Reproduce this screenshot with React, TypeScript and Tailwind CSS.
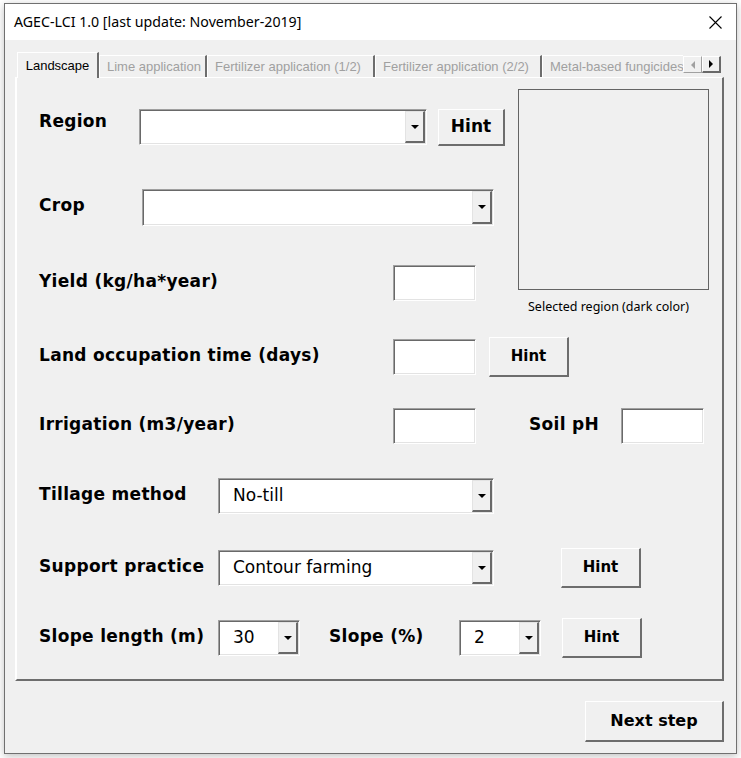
import type { ReactNode } from "react";

const sunken =
  "bg-white border border-t-[#a0a0a0] border-l-[#a0a0a0] border-r-white border-b-white shadow-[inset_1px_1px_0_#696969,inset_-1px_-1px_0_#e3e3e3] p-[1px]";
const raised =
  "flex items-center justify-center bg-[#f0f0f0] border-t border-l border-r-2 border-b-2 border-t-white border-l-white border-r-[#6d6d6d] border-b-[#6d6d6d] text-black font-bold font-['DejaVu_Sans',sans-serif]";
const label =
  "shrink-0 pb-[3px] text-[17px] font-bold tracking-[0.3px] text-black font-['DejaVu_Sans',sans-serif]";

const tabs = [
  { label: "Lime application", w: "w-[108px]" },
  { label: "Fertilizer application (1/2)", w: "w-[168px]" },
  { label: "Fertilizer application (2/2)", w: "w-[167px]" },
  { label: "Metal-based fungicides", w: "w-[160px]" },
];

function Arrow({ dir, color }: { dir: "down" | "left" | "right"; color: string }) {
  if (dir === "down")
    return (
      <svg width="8" height="4" viewBox="0 0 8 4">
        <polygon points="0,0 8,0 4,4" fill={color} />
      </svg>
    );
  return (
    <svg width="4" height="8" viewBox="0 0 4 8">
      <polygon points={dir === "right" ? "0,0 4,4 0,8" : "4,0 0,4 4,8"} fill={color} />
    </svg>
  );
}

function Combo({ w, h = "h-[36px]", value }: { w: string; h?: string; value?: string }) {
  return (
    <div className={`${sunken} ${w} ${h} flex shrink-0`}>
      <div className="flex flex-1 items-center pl-[13px] text-[17px] text-black font-['DejaVu_Sans',sans-serif]">
        {value}
      </div>
      <div className="flex w-[20px] items-center justify-center border-l border-t border-r-2 border-b-2 border-l-[#e3e3e3] border-t-[#e3e3e3] border-r-[#696969] border-b-[#696969] bg-[#f0f0f0]">
        <Arrow dir="down" color="#000" />
      </div>
    </div>
  );
}

function Field({ w = "w-[83px]" }: { w?: string }) {
  return <div className={`${sunken} ${w} h-[36px] shrink-0`} />;
}

function Hint({ cls, text = "text-[15px]" }: { cls: string; text?: string }) {
  return <div className={`${raised} ${cls} ${text} shrink-0`}>Hint</div>;
}

function Row({ mt, children }: { mt: string; children: ReactNode }) {
  return <div className={`flex h-[40px] items-center ${mt}`}>{children}</div>;
}

export default function App() {
  return (
    <div className="h-[758px] w-[741px] bg-white pl-[4px] pt-[3px]">
      <div className="flex h-[751px] w-[733px] flex-col border border-[#707070] shadow-[0_2px_8px_rgba(0,0,0,0.25)]">
        {/* title bar */}
        <div className="flex h-[36px] shrink-0 items-center justify-between bg-white pl-[9px] pr-[14px]">
          <span className="text-[14.2px] text-black font-['Noto_Sans',sans-serif]">
            AGEC-LCI 1.0 [last update: November-2019]
          </span>
          <svg width="13" height="13" viewBox="0 0 13 13">
            <path d="M0.5 0.5 L12.5 12.5 M12.5 0.5 L0.5 12.5" stroke="#000" strokeWidth="1.1" />
          </svg>
        </div>

        {/* body */}
        <div className="flex flex-1 flex-col bg-[#f0f0f0] pl-[10px] pt-[12px]">
          {/* tab strip */}
          <div className="relative z-10 flex h-[25px] w-[709px] items-end pl-[2px]">
            <div className="-mb-[1px] flex h-[26px] w-[82px] shrink-0 items-start justify-center border-l border-t border-r-2 border-l-white border-t-white border-r-[#6d6d6d] bg-[#f0f0f0] pt-[3px] text-[13px] text-black font-['Liberation_Sans',sans-serif]">
              Landscape
            </div>
            <div className="flex w-[584px] overflow-hidden">
              {tabs.map((t) => (
                <div
                  key={t.label}
                  className={`${t.w} flex h-[22px] shrink-0 items-center justify-start whitespace-nowrap border-l border-t border-r-2 border-l-white border-t-white border-r-[#6d6d6d] bg-[#f0f0f0] pl-[7px] text-[13px] text-[#a0a0a0] font-['Liberation_Sans',sans-serif]`}
                >
                  {t.label}
                </div>
              ))}
            </div>
            <div className="mb-[4px] flex h-[17px] shrink-0">
              <div className="flex w-[19px] items-center justify-center border-l border-t border-r border-b border-l-white border-t-white border-r-[#a0a0a0] border-b-[#a0a0a0] bg-[#f0f0f0]">
                <Arrow dir="left" color="#a0a0a0" />
              </div>
              <div className="flex w-[19px] items-center justify-center border-l border-t border-r-2 border-b-2 border-l-white border-t-white border-r-[#696969] border-b-[#696969] bg-[#f0f0f0]">
                <Arrow dir="right" color="#000" />
              </div>
            </div>
          </div>

          {/* tab panel */}
          <div className="flex h-[604px] w-[709px] flex-col border-t border-l-2 border-r-2 border-b-2 border-t-white border-l-white border-r-[#6d6d6d] border-b-[#6d6d6d] pl-[22px]">
            <div className="flex items-start pt-[11px]">
              <div className="flex w-[479px] shrink-0 flex-col pt-[18px]">
                <Row mt="mt-0">
                  <span className={`${label} w-[100px] !pb-[11px]`}>Region</span>
                  <Combo w="w-[288px]" />
                  <Hint cls="ml-[11px] h-[37px] w-[67px]" text="text-[17px]" />
                </Row>
                <Row mt="mt-[40px]">
                  <span className={`${label} w-[103px]`}>Crop</span>
                  <Combo w="w-[352px]" h="h-[37px]" />
                </Row>
                <Row mt="mt-[36px]">
                  <span className={`${label} w-[354px]`}>Yield (kg/ha*year)</span>
                  <Field />
                </Row>
              </div>
              <div className="flex flex-col">
                <div className="h-[201px] w-[191px] border border-[#646464]" />
                <div className="mt-[9px] h-[16px] pl-[10px] text-[12.5px] leading-[16px] text-black font-['Noto_Sans',sans-serif]">
                  Selected region (dark color)
                </div>
              </div>
            </div>

            <Row mt="mt-[22px]">
              <span className={`${label} w-[354px]`}>Land occupation time (days)</span>
              <Field />
              <Hint cls="ml-[13px] h-[40px] w-[80px]" />
            </Row>
            <Row mt="mt-[29px]">
              <span className={`${label} w-[354px]`}>Irrigation (m3/year)</span>
              <Field />
              <span className={`${label} ml-[53px] w-[92px]`}>Soil pH</span>
              <Field />
            </Row>
            <Row mt="mt-[30px]">
              <span className={`${label} w-[179px]`}>Tillage method</span>
              <Combo w="w-[276px]" value="No-till" />
            </Row>
            <Row mt="mt-[32px]">
              <span className={`${label} w-[179px]`}>Support practice</span>
              <Combo w="w-[276px]" value="Contour farming" />
              <Hint cls="ml-[67px] h-[40px] w-[80px]" />
            </Row>
            <Row mt="mt-[30px]">
              <span className={`${label} w-[179px]`}>Slope length (m)</span>
              <Combo w="w-[82px]" value="30" />
              <span className={`${label} ml-[29px] w-[130px]`}>Slope (%)</span>
              <Combo w="w-[82px]" value="2" />
              <Hint cls="ml-[21px] h-[40px] w-[80px]" />
            </Row>
          </div>

          <div className="flex justify-end pr-[12px] pt-[20px]">
            <div className={`${raised} h-[41px] w-[139px] text-[16px]`}>Next step</div>
          </div>
        </div>
      </div>
    </div>
  );
}
